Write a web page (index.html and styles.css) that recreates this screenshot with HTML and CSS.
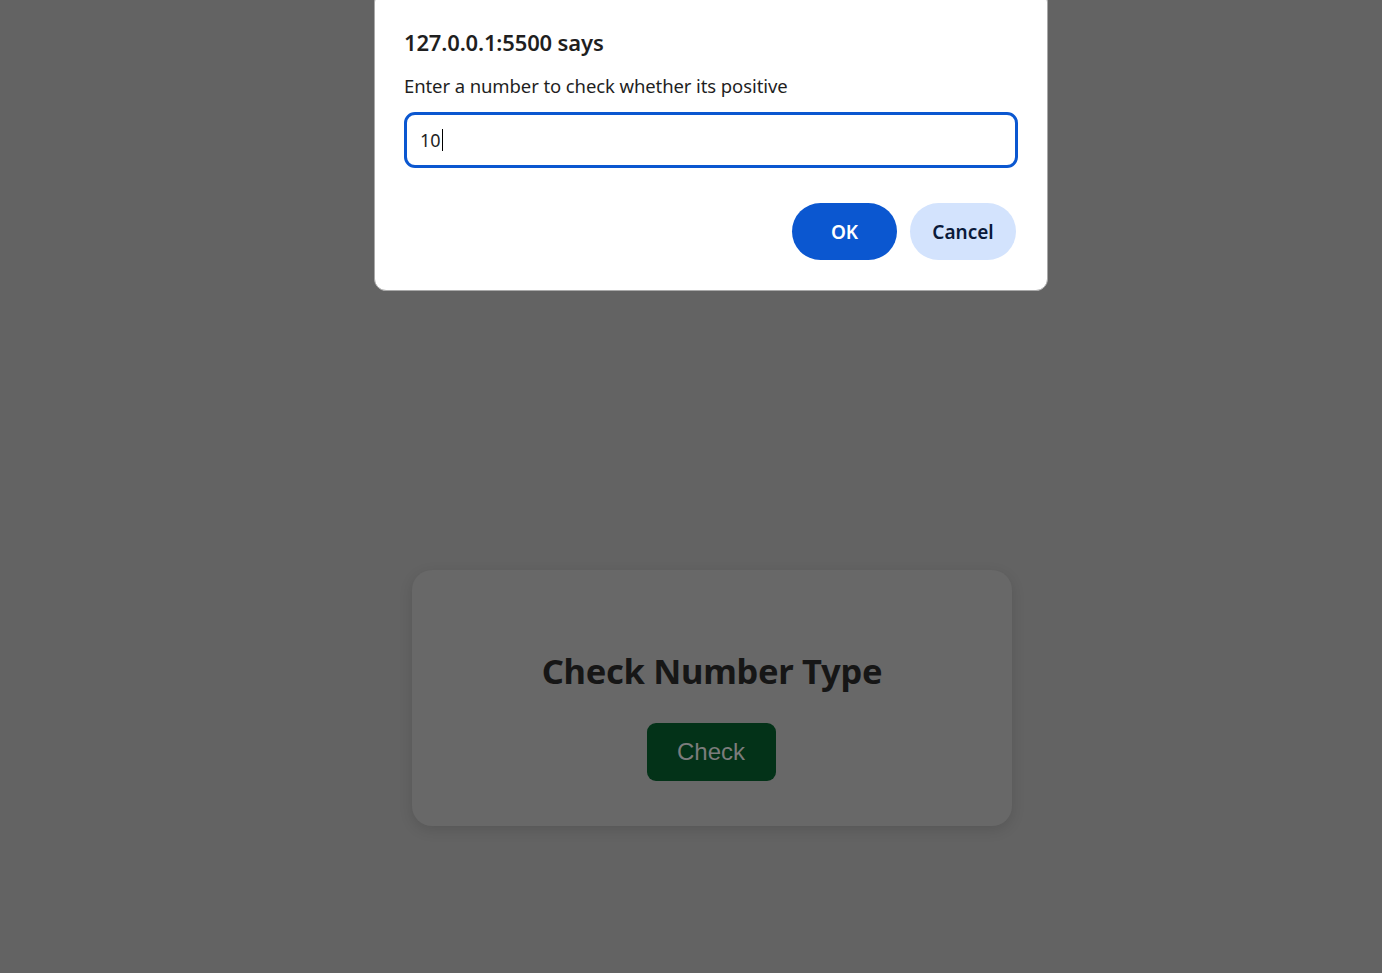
FILE: index.html
```html
<!DOCTYPE html>
<html lang="en">
<head>
<meta charset="utf-8">
<title>Check Number Type</title>
<link rel="stylesheet" href="styles.css">
</head>
<body>
<main class="page">
  <section class="card">
    <h1 class="card-title">Check Number Type</h1>
    <button class="check-btn">Check</button>
  </section>
</main>
<div class="dialog">
  <div class="dialog-title">127.0.0.1:5500 says</div>
  <div class="dialog-msg">Enter a number to check whether its positive</div>
  <div class="dialog-input"><span class="val">10</span><span class="caret"></span></div>
  <div class="dialog-actions">
    <button class="btn btn-ok">OK</button>
    <button class="btn btn-cancel">Cancel</button>
  </div>
</div>
</body>
</html>
```
FILE: styles.css
```css
* { box-sizing: border-box; }
html, body { margin: 0; padding: 0; }
body {
  background: #636363;
  width: 1382px;
  height: 973px;
  overflow: hidden;
  position: relative;
  font-family: "Noto Sans", "Open Sans", sans-serif;
}
.page {
  display: flex;
  justify-content: center;
  padding-top: 570px;
}
.card {
  width: 600px;
  height: 256px;
  margin-left: 42px;
  background: #686868;
  border-radius: 20px;
  box-shadow: 0 4px 14px rgba(0,0,0,0.12);
  display: flex;
  flex-direction: column;
  align-items: center;
  padding-top: 76px;
}
.card-title {
  margin: 0;
  font-family: "Noto Sans", sans-serif;
  font-weight: 700;
  font-size: 34.5px;
  line-height: 50px;
  color: #161616;
  letter-spacing: -0.3px;
}
.check-btn {
  margin-top: 27px;
  margin-right: 2px;
  width: 129px;
  height: 58px;
  border: none;
  border-radius: 9px;
  background: #033218;
  color: #7c7c7c;
  font-family: "Liberation Sans", Arial, sans-serif;
  font-size: 24px;
  padding: 0;
}
.dialog {
  position: absolute;
  left: 374px;
  top: -10px;
  width: 674px;
  height: 301px;
  background: #fff;
  border: 1px solid #a9a9a9;
  border-radius: 12px;
  padding: 36px 30px 0 29px;
  color: #1f1f1f;
}
.dialog-title {
  font-size: 22px;
  font-weight: 600;
  line-height: 30px;
  letter-spacing: -0.15px;
}
.dialog-msg {
  margin-top: 17px;
  font-size: 18.5px;
  line-height: 24px;
  letter-spacing: -0.1px;
}
.dialog-input {
  margin-top: 14px;
  height: 56px;
  width: 614px;
  border: 3px solid #0b57d0;
  border-radius: 11px;
  display: flex;
  align-items: center;
  padding-left: 13px;
  font-size: 18px;
  color: #1f1f1f;
}
.caret {
  display: inline-block;
  width: 1px;
  height: 22px;
  background: #000;
  margin-left: 1px;
}
.dialog-actions {
  margin-top: 35px;
  display: flex;
  justify-content: flex-end;
  gap: 13px;
  padding-right: 1px;
}
.btn {
  height: 57px;
  width: 105px;
  border: none;
  border-radius: 29px;
  font-family: "Noto Sans", sans-serif;
  font-size: 19px;
  font-weight: 600;
  padding: 0;
}
.btn-ok { background: #0b57d0; color: #fff; }
.btn-cancel { background: #d3e3fd; color: #0a1a3a; width: 106px; }
```
